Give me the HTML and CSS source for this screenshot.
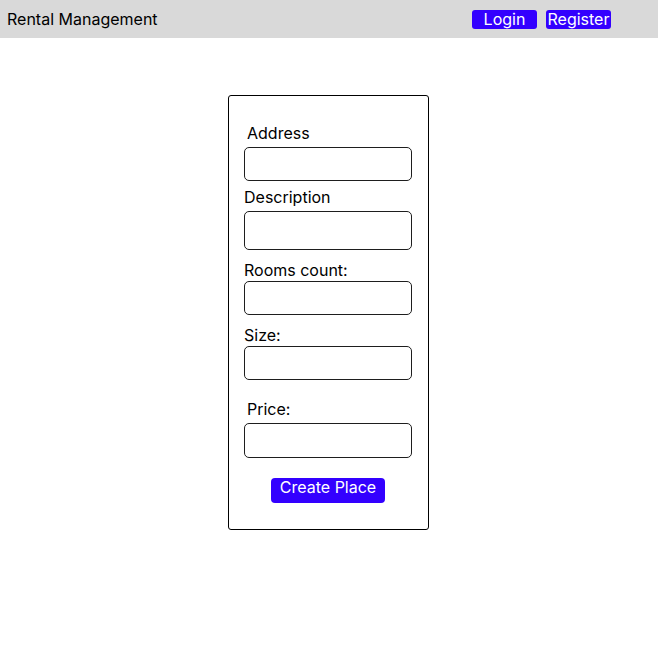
FILE: index.html
```html
<!DOCTYPE html>
<html lang="en">
<head>
<meta charset="utf-8">
<title>Rental Management</title>
<link rel="stylesheet" href="styles.css">
</head>
<body>
<header class="topbar">
  <div class="brand">Rental Management</div>
  <nav class="nav">
    <a class="nav-btn" href="#">Login</a>
    <a class="nav-btn" href="#">Register</a>
  </nav>
</header>
<main class="page">
  <form class="card">
    <label class="label label--indent label--first" for="address">Address</label>
    <input class="field field--34" id="address" type="text">
    <label class="label label--gap7" for="description">Description</label>
    <input class="field field--39" id="description" type="text">
    <label class="label label--gap11" for="rooms">Rooms count:</label>
    <input class="field field--tight field--34" id="rooms" type="text">
    <label class="label label--gap11" for="size">Size:</label>
    <input class="field field--tight field--34" id="size" type="text">
    <label class="label label--indent label--gap20" for="price">Price:</label>
    <input class="field field--35" id="price" type="text">
    <button class="submit" type="button">Create Place</button>
  </form>
</main>
</body>
</html>
```

FILE: styles.css
```css
* { box-sizing: border-box; }

body {
  margin: 0;
  font-family: Inter, "Noto Sans", sans-serif;
  font-size: 16px;
  color: #000;
  background: #fff;
}

.topbar {
  height: 38px;
  background: #d9d9d9;
  display: flex;
  align-items: flex-start;
}

.brand {
  margin: 10px 0 0 7px;
  line-height: 19px;
}

.nav {
  margin: 10px 47px 0 auto;
  display: flex;
  gap: 9px;
}

.nav-btn {
  display: block;
  width: 65px;
  height: 19px;
  line-height: 19px;
  text-align: center;
  white-space: nowrap;
  background: #3300ff;
  color: #fff;
  border-radius: 3px;
  text-decoration: none;
}

.page {
  display: flex;
  justify-content: center;
  padding: 57px 1px 0 0;
}

.card {
  width: 201px;
  margin: 0;
  border: 1px solid #000;
  border-radius: 3px;
  padding: 28px 16px 26px 15px;
  display: flex;
  flex-direction: column;
  align-items: flex-start;
}

.label {
  display: block;
  line-height: 19px;
}

.label--indent { padding-left: 3px; }
.label--gap7 { margin-top: 7px; }
.label--gap11 { margin-top: 11px; }
.label--gap20 { margin-top: 20px; }

.field {
  display: block;
  width: 168px;
  margin: 4px 0 0 0;
  padding: 0;
  border: 1px solid #1e1e1e;
  border-radius: 5px;
  background: #fff;
  font: inherit;
}

.field--tight { margin-top: 1px; }
.field--34 { height: 34px; }
.field--35 { height: 35px; }
.field--39 { height: 39px; }

.submit {
  align-self: center;
  margin-top: 20px;
  width: 114px;
  height: 25px;
  padding: 0 0 6px 0;
  border: none;
  border-radius: 4px;
  background: #3300ff;
  color: #fff;
  font: inherit;
  line-height: 19px;
  text-align: center;
}
```
